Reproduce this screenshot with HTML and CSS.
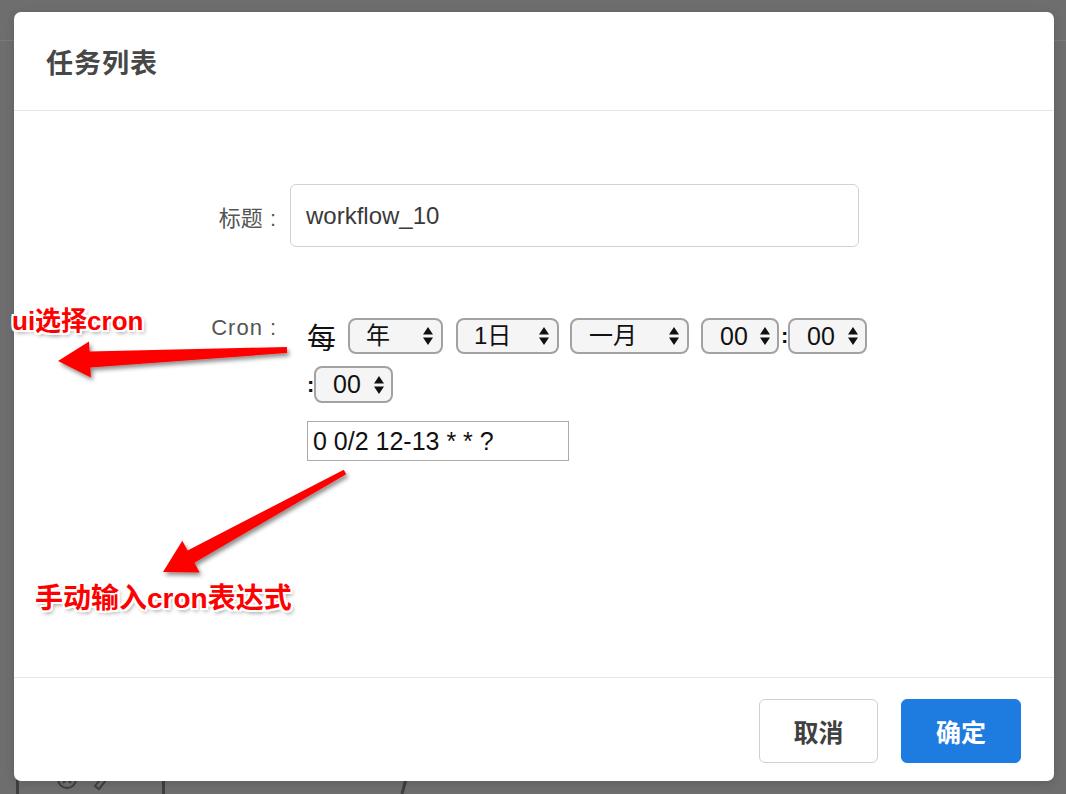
FILE: index.html
```html
<!DOCTYPE html>
<html lang="zh-CN">
<head>
<meta charset="utf-8">
<title>任务列表</title>
<link rel="stylesheet" href="styles.css">
</head>
<body>
<div class="page">
  <div class="page-top"></div>
  <div class="page-main"></div>
  <div class="page-bottom">
    <svg class="page-bottom-art" width="1066" height="40" viewBox="0 0 1066 40">
      <rect x="16" y="0" width="3" height="40" fill="#3f3f3f"/>
      <circle cx="67" cy="25" r="9" fill="none" stroke="#3f3f3f" stroke-width="2"/>
      <path d="M63 21 L71 29 M71 21 L63 29" stroke="#3f3f3f" stroke-width="2"/>
      <path d="M95 32 L106 18 L110 21 L99 35 Z" fill="none" stroke="#3f3f3f" stroke-width="2"/>
      <rect x="162" y="0" width="3" height="40" fill="#3f3f3f"/>
      <path d="M410 10 L402 40" stroke="#3f3f3f" stroke-width="3"/>
    </svg>
  </div>
</div>

<div class="modal">
  <div class="modal-header">
    <h2 class="modal-title">任务列表</h2>
  </div>
  <div class="modal-body">
    <div class="form-row title-row">
      <label class="form-label">标题<span class="colon">:</span></label>
      <input class="text-input" type="text" value="workflow_10">
    </div>
    <div class="form-row cron-row">
      <label class="form-label cron-label"><span class="latin">Cron</span><span class="colon">:</span></label>
      <div class="cron">
        <div class="cron-line">
          <span class="every">每</span>
          <span class="sel sel-year"><span class="sel-text">年</span><svg class="sel-arrow" width="10" height="18" viewBox="0 0 10 18"><path d="M5 0 L10 7.5 L0 7.5 Z M0 10.5 L10 10.5 L5 18 Z" fill="#111"/></svg></span>
          <span class="sel sel-day"><span class="sel-text">1日</span><svg class="sel-arrow" width="10" height="18" viewBox="0 0 10 18"><path d="M5 0 L10 7.5 L0 7.5 Z M0 10.5 L10 10.5 L5 18 Z" fill="#111"/></svg></span>
          <span class="sel sel-month"><span class="sel-text">一月</span><svg class="sel-arrow" width="10" height="18" viewBox="0 0 10 18"><path d="M5 0 L10 7.5 L0 7.5 Z M0 10.5 L10 10.5 L5 18 Z" fill="#111"/></svg></span>
          <span class="sel sel-num sel-hour"><span class="sel-text">00</span><svg class="sel-arrow" width="10" height="18" viewBox="0 0 10 18"><path d="M5 0 L10 7.5 L0 7.5 Z M0 10.5 L10 10.5 L5 18 Z" fill="#111"/></svg></span>
          <span class="sep">:</span>
          <span class="sel sel-num"><span class="sel-text">00</span><svg class="sel-arrow" width="10" height="18" viewBox="0 0 10 18"><path d="M5 0 L10 7.5 L0 7.5 Z M0 10.5 L10 10.5 L5 18 Z" fill="#111"/></svg></span>
        </div>
        <div class="cron-line cron-line-2">
          <span class="sep">:</span>
          <span class="sel sel-num"><span class="sel-text">00</span><svg class="sel-arrow" width="10" height="18" viewBox="0 0 10 18"><path d="M5 0 L10 7.5 L0 7.5 Z M0 10.5 L10 10.5 L5 18 Z" fill="#111"/></svg></span>
        </div>
        <input class="cron-input" type="text" value="0 0/2 12-13 * * ?">
      </div>
    </div>
  </div>
  <div class="modal-footer">
    <button class="btn btn-cancel" type="button">取消</button>
    <button class="btn btn-primary" type="button">确定</button>
  </div>
</div>

<svg class="annot-arrows" width="1066" height="794" viewBox="0 0 1066 794">
  <defs>
    <filter id="arrowShadow" x="-10%" y="-20%" width="130%" height="150%">
      <feDropShadow dx="2" dy="3" stdDeviation="2" flood-color="#000" flood-opacity="0.45"/>
    </filter>
  </defs>
  <polygon filter="url(#arrowShadow)" fill="#fe0000"
    points="58,361 89,341.5 89.6,351.5 286.9,347 287.1,353 90.4,367.5 90.9,377.5"/>
  <polygon filter="url(#arrowShadow)" fill="#fe0000"
    points="163,572 182.3,540.8 187.6,550.5 343.8,469.8 346.2,474.2 194.4,562.7 199.7,572.4"/>
</svg>
<span class="annot annot-ui">ui选择cron</span>
<span class="annot annot-manual">手动输入cron表达式</span>
</body>
</html>
```

FILE: styles.css
```css
html, body {
  margin: 0;
  padding: 0;
}

body {
  width: 1066px;
  height: 794px;
  overflow: hidden;
  background: #6e6e6e;
  font-family: "Liberation Sans", "Noto Sans CJK SC", sans-serif;
  position: relative;
}

/* dimmed page behind the dialog */
.page {
  height: 794px;
  display: flex;
  flex-direction: column;
}

.page-top {
  height: 40px;
  border-bottom: 1px solid #7b7b7b;
}

.page-main {
  flex: 1;
}

.page-bottom {
  height: 40px;
  display: flex;
}

.page-bottom-art {
  display: block;
}

/* dialog */
.modal {
  position: absolute;
  left: 14px;
  top: 12px;
  width: 1040px;
  height: 769px;
  background: #fff;
  border-radius: 7px;
  box-shadow: 0 2px 10px rgba(0, 0, 0, 0.15);
  display: flex;
  flex-direction: column;
  overflow: hidden;
}

.modal-header {
  height: 98px;
  border-bottom: 1px solid #e6e6e6;
  display: flex;
  align-items: center;
  padding-left: 32px;
}

.modal-title {
  margin: 0;
  font-family: "Noto Sans CJK SC", sans-serif;
  font-size: 27px;
  font-weight: 700;
  color: #474747;
  letter-spacing: 1px;
}

.modal-body {
  height: 566px;
  box-sizing: border-box;
  padding-top: 73px;
}

.form-row {
  display: flex;
}

.title-row {
  align-items: center;
}

.form-label {
  padding-right: 14px;
  box-sizing: border-box;
  width: 276px;
  text-align: right;
  font-family: "Liberation Sans", "Noto Sans CJK SC", sans-serif;
  font-size: 22px;
  color: #555;
}

.latin {
  letter-spacing: 1px;
}

.colon {
  margin-left: 7px;
}

.text-input {
  width: 569px;
  height: 63px;
  box-sizing: border-box;
  border: 1.5px solid #d2d2d2;
  border-radius: 6px;
  padding: 0 15px;
  font-family: "Liberation Sans", "Noto Sans CJK SC", sans-serif;
  font-size: 24px;
  color: #3a3a3a;
  outline: none;
  margin: 0;
}

.cron-row {
  margin-top: 71px;
  align-items: flex-start;
}

.cron-label {
  line-height: 22px;
  margin-top: -1px;
}

.cron {
  padding-left: 17px;
  display: flex;
  flex-direction: column;
  align-items: flex-start;
}

.cron-line {
  height: 36px;
  display: flex;
  align-items: center;
}

.cron-line-2 {
  margin-top: 12px;
  height: 37px;
}

.every {
  font-family: "Noto Sans CJK SC", sans-serif;
  font-size: 29px;
  color: #111;
  margin-right: 12px;
  line-height: 36px;
}

.sel {
  height: 36px;
  box-sizing: border-box;
  border: 2px solid #a2a2a2;
  border-radius: 8px;
  background: #f5f5f5;
  display: flex;
  align-items: center;
  justify-content: space-between;
  padding: 0 8px 0 16px;
  font-family: "Liberation Sans", "Noto Sans CJK SC", sans-serif;
  font-size: 24px;
  color: #111;
}

.sel-text {
  line-height: 1;
}

.sel-arrow {
  display: block;
  flex-shrink: 0;
}

.sel-year {
  width: 95px;
  margin-right: 13px;
}

.sel-day {
  width: 103px;
  margin-right: 11px;
}

.sel-month {
  width: 119px;
  margin-right: 12px;
  padding-left: 17px;
}

.sel-num {
  width: 79px;
  padding-left: 17px;
  padding-right: 7px;
  font-size: 25px;
}

.sel-hour {
  width: 78px;
  margin-right: 2px;
}

.cron-line-2 .sel-num {
  height: 37px;
}

.sep {
  width: 7px;
  text-align: center;
  font-family: "Liberation Sans", sans-serif;
  font-weight: 700;
  font-size: 22px;
  color: #111;
  line-height: 1;
}

.cron-input {
  margin-top: 18px;
  width: 262px;
  height: 40px;
  box-sizing: border-box;
  border: 1px solid #ababab;
  border-radius: 0;
  padding: 0 5px;
  font-family: "Liberation Sans", sans-serif;
  font-size: 25px;
  color: #111;
  outline: none;
}

.modal-footer {
  flex: 1;
  border-top: 1px solid #e6e6e6;
  display: flex;
  justify-content: flex-end;
  align-items: flex-start;
  gap: 23px;
  padding-top: 21px;
  padding-right: 33px;
}

.btn {
  height: 64px;
  border-radius: 6px;
  font-family: "Noto Sans CJK SC", sans-serif;
  font-size: 25px;
  font-weight: 700;
  margin: 0;
  padding: 0;
  cursor: pointer;
}

.btn-cancel {
  width: 119px;
  background: #fff;
  border: 1.5px solid #d0d0d0;
  color: #404040;
}

.btn-primary {
  width: 120px;
  background: #1e7ce0;
  border: 1px solid #1e7ce0;
  color: #fff;
}

/* annotations drawn over the screenshot */
.annot-arrows {
  position: absolute;
  left: 0;
  top: 0;
  pointer-events: none;
}

.annot {
  position: absolute;
  font-family: "Liberation Sans", "Noto Sans CJK SC", sans-serif;
  font-weight: 700;
  color: #fe0000;
  white-space: nowrap;
  line-height: 1;
  text-shadow:
    -2px -2px 0 #fff, 2px -2px 0 #fff, -2px 2px 0 #fff, 2px 2px 0 #fff,
    0 -2px 0 #fff, 0 2px 0 #fff, -2px 0 0 #fff, 2px 0 0 #fff,
    2px 3px 4px rgba(0, 0, 0, 0.45);
}

.annot-ui {
  left: 12px;
  top: 308px;
  font-size: 26px;
}

.annot-manual {
  left: 35px;
  top: 585px;
  font-size: 28px;
}
```
